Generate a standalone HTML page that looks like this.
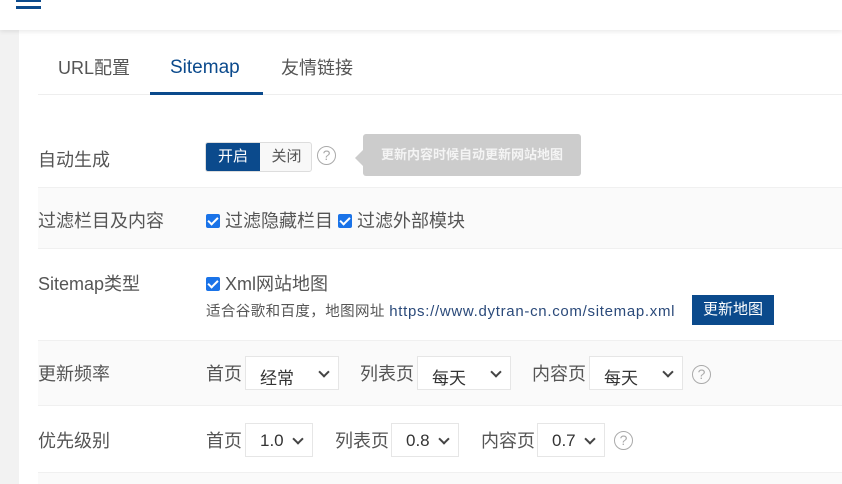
<!DOCTYPE html>
<html><head><meta charset="utf-8"><style>
*{margin:0;padding:0;box-sizing:border-box}
body{width:842px;height:484px;overflow:hidden;background:#f2f2f2;font-family:"Liberation Sans","Noto Sans CJK SC",sans-serif;color:#555;position:relative}
.hdr{position:absolute;left:0;top:0;width:842px;height:30px;background:#fff;box-shadow:0 2px 4px rgba(0,0,0,.08);z-index:2}
.bar{position:absolute;left:16px;width:25px;height:3px;background:#0b4a8c}
.main{position:absolute;left:19px;top:30px;width:823px;height:454px;background:#fff}
.abs{position:absolute;white-space:nowrap}
.tab{font-size:18px;top:24px;color:#555}
.row{position:absolute;left:19px;width:804px}
.lbl{position:absolute;left:0;font-size:17px;color:#555}
.cb{display:inline-block;width:14px;height:14px;background:#1a73e8;border-radius:2px;vertical-align:-1px;position:relative;margin-right:5px}
.cb:after{content:"";position:absolute;left:4px;top:1px;width:4px;height:8px;border:solid #fff;border-width:0 2px 2px 0;transform:rotate(45deg)}
.sel{position:absolute;height:34px;border:1px solid #e6e6e6;background:#fff;font-size:17px;color:#333;padding:7px 0 0 14px}
.sel:after{content:"";position:absolute;right:10px;top:11px;width:6px;height:6px;border:solid #444;border-width:0 2px 2px 0;transform:rotate(45deg)}
.q{position:absolute;width:19px;height:19px;border:1.5px solid #aaa;border-radius:50%;color:#aaa;font-size:14px;text-align:center;line-height:16px}
</style></head><body>
<div class="hdr"><div class="bar" style="top:-1px"></div><div class="bar" style="top:6px"></div></div>
<div class="main">
 <div class="abs tab" style="left:39px">URL配置</div>
 <div class="abs tab" style="left:151px;top:27px;color:#0b4a8c;font-size:19px">Sitemap</div>
 <div class="abs tab" style="left:262px">友情链接</div>
 <div class="abs" style="left:19px;top:64px;width:804px;height:1px;background:#eee"></div>
 <div class="abs" style="left:131px;top:62px;width:113px;height:3px;background:#0b4a8c"></div>

 <div class="row" style="top:157px;height:61px;background:#fafafa;border-top:1px solid #f0f0f0"></div>
 <div class="row" style="top:310px;height:66px;background:#fafafa;border-top:1px solid #f0f0f0;border-bottom:1px solid #f0f0f0"></div>
 <div class="row" style="top:218px;height:1px;background:#f0f0f0"></div>
 <div class="row" style="top:442px;height:12px;background:#fafafa;border-top:1px solid #f0f0f0"></div>

 <div class="abs lbl" style="left:19px;top:116px;font-size:18px">自动生成</div>
 <div class="abs" style="left:186px;top:112px;width:107px;height:30px;border:1px solid #ddd;border-radius:3px;background:#f8f8f8;font-size:15px;overflow:hidden">
  <div style="position:absolute;left:0;top:0;width:54px;height:30px;background:#0b4a8c;color:#fff;text-align:center;line-height:28px">开启</div>
  <div style="position:absolute;left:54px;top:0;width:53px;text-align:center;line-height:28px;color:#555">关闭</div>
 </div>
 <div class="q" style="left:298px;top:116px">?</div>
 <div class="abs" style="left:344px;top:104px;width:218px;height:42px;background:#ccc;border-radius:3px;color:#f4f4f4;font-size:13px;text-align:center;line-height:42px;font-weight:bold">更新内容时候自动更新网站地图</div>
 <div class="abs" style="left:336px;top:120px;border:8px solid transparent;border-right-color:#ccc;border-left:0"></div>

 <div class="abs lbl" style="left:19px;top:177px;font-size:18px">过滤栏目及内容</div>
 <div class="abs" style="left:187px;top:177px;font-size:18px"><span class="cb"></span>过滤隐藏栏目 <span class="cb"></span>过滤外部模块</div>

 <div class="abs lbl" style="left:19px;top:240px;font-size:18px">Sitemap类型</div>
 <div class="abs" style="left:187px;top:240px;font-size:18px"><span class="cb"></span>Xml网站地图</div>
 <div class="abs" style="left:187px;top:270px;font-size:14.5px;letter-spacing:.4px">适合谷歌和百度，地图网址 <span style="color:#2b4a7a;font-size:15px;letter-spacing:.7px">https://www.dytran-cn.com/sitemap.xml</span></div>
 <div class="abs" style="left:673px;top:265px;width:82px;height:30px;background:#0b4a8c;color:#fff;font-size:15px;text-align:center;line-height:30px">更新地图</div>

 <div class="abs lbl" style="left:19px;top:330px;font-size:18px">更新频率</div>
 <div class="abs" style="left:187px;top:330px;font-size:18px">首页</div>
 <div class="sel" style="left:226px;top:326px;width:94px">经常</div>
 <div class="abs" style="left:341px;top:330px;font-size:18px">列表页</div>
 <div class="sel" style="left:398px;top:326px;width:94px">每天</div>
 <div class="abs" style="left:513px;top:330px;font-size:18px">内容页</div>
 <div class="sel" style="left:570px;top:326px;width:94px">每天</div>
 <div class="q" style="left:673px;top:335px">?</div>

 <div class="abs lbl" style="left:19px;top:397px;font-size:18px">优先级别</div>
 <div class="abs" style="left:187px;top:397px;font-size:18px">首页</div>
 <div class="sel" style="left:226px;top:393px;width:68px">1.0</div>
 <div class="abs" style="left:316px;top:397px;font-size:18px">列表页</div>
 <div class="sel" style="left:372px;top:393px;width:68px">0.8</div>
 <div class="abs" style="left:462px;top:397px;font-size:18px">内容页</div>
 <div class="sel" style="left:518px;top:393px;width:68px">0.7</div>
 <div class="q" style="left:595px;top:401px">?</div>
</div>
</body></html>
